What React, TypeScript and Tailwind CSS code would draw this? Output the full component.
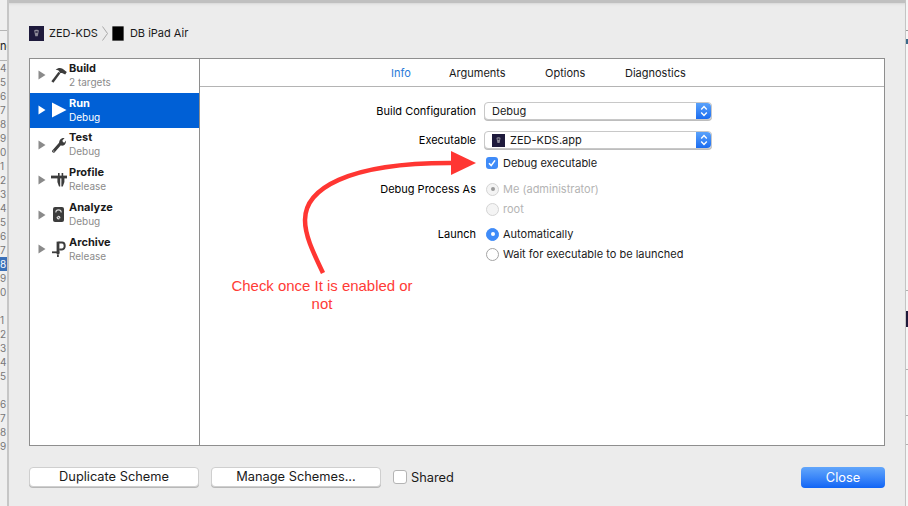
import React from 'react';

const lineNumbers = ['4', '5', '6', '7', '8', '9', '0', '1', '2', '3', '4', '5', '6', '7', '8', '9', '0', '', '1', '2', '3', '4', '5', '', '6', '7', '8', '9'];

const AppIcon = ({ size }: { size: number }) => (
  <svg width={size} height={size} viewBox="0 0 16 16" className="shrink-0">
    <rect width="16" height="16" fill="#1e1a3c" />
    <path d="M5.5 5 C6 3.5 10 3.5 10.5 5 L9.8 8.5 L9.3 11 H6.7 L6.2 8.5 Z" fill="#8d8b98" />
    <rect x="6.8" y="5.4" width="2.4" height="2" fill="#3a3650" />
  </svg>
);

const Hammer = () => (
  <svg width="16" height="16" viewBox="0 0 16 16">
    <path d="M0.4 14.2 L7.6 4.8 L9.4 6.2 L2.4 15.8 Z" fill="#3c3c3c" />
    <path d="M4.6 2.6 C7 0.6 9.6 0.4 11.6 1.8 L15.8 5 L14.2 7.6 L11 6 L9.2 6 L7.6 3.6 Z" fill="#3c3c3c" />
  </svg>
);

const RunTriangle = () => (
  <svg width="16" height="16" viewBox="0 0 16 16">
    <path d="M1 0.5 L15.5 8 L1 15.5 Z" fill="#ffffff" />
  </svg>
);

const Wrench = () => (
  <svg width="14" height="16" viewBox="0 0 14 16">
    <path d="M1.6 14.2 L8.4 6.6" stroke="#3c3c3c" strokeWidth="3" strokeLinecap="round" />
    <path d="M7.2 6.2 C6.8 3 9.4 0.6 12.6 1 L10.4 3.4 L11 5.2 L12.6 5.6 L14 3.6 C14.2 7 11.8 9 9.2 8.6 Z" fill="#3c3c3c" />
    <circle cx="1.8" cy="14" r="0.6" fill="#ffffff" />
  </svg>
);

const Caliper = () => (
  <svg width="16" height="14" viewBox="0 0 16 14">
    <rect x="0" y="2.6" width="16" height="2.8" fill="#3c3c3c" />
    <rect x="7" y="0" width="1.6" height="3" fill="#3c3c3c" />
    <rect x="10.6" y="0" width="1.6" height="3" fill="#3c3c3c" />
    <path d="M6.4 5 H9.2 V13.4 H8 L6.4 9 Z" fill="#3c3c3c" />
    <path d="M10.4 5 H13.4 V9 L11.8 13.4 H10.4 Z" fill="#3c3c3c" />
  </svg>
);

const AnalyzeIcon = () => (
  <svg width="11" height="15" viewBox="0 0 11 15">
    <rect width="11" height="15" rx="2" fill="#3c3c3c" />
    <path d="M2.8 5.6 A2.7 2.7 0 0 1 8.2 5.6" stroke="#d8d8d8" strokeWidth="1.1" fill="none" />
    <circle cx="5.5" cy="10.6" r="1.9" fill="#d8d8d8" />
    <path d="M4.4 9.6 L6.6 11.6" stroke="#3c3c3c" strokeWidth="0.8" />
  </svg>
);

const Clamp = () => (
  <svg width="14" height="16" viewBox="0 0 14 16">
    <path d="M6.5 1.6 H10 C13.6 1.6 13.6 8.4 10 8.4 H7.2" stroke="#3c3c3c" strokeWidth="2" fill="none" />
    <rect x="4.6" y="0.6" width="2.8" height="12.6" fill="#3c3c3c" />
    <rect x="0" y="10.4" width="7.4" height="1.8" fill="#3c3c3c" />
    <rect x="5" y="13.4" width="1.8" height="2.6" fill="#3c3c3c" />
  </svg>
);

const schemes = [
  { name: 'Build', sub: '2 targets', icon: <Hammer /> },
  { name: 'Run', sub: 'Debug', icon: <RunTriangle />, active: true },
  { name: 'Test', sub: 'Debug', icon: <Wrench /> },
  { name: 'Profile', sub: 'Release', icon: <Caliper /> },
  { name: 'Analyze', sub: 'Debug', icon: <AnalyzeIcon /> },
  { name: 'Archive', sub: 'Release', icon: <Clamp /> },
];

const SelectChevrons = () => (
  <span className="flex h-full w-[15px] items-center justify-center rounded-r-[4px] bg-gradient-to-b from-[#5aa2fb] to-[#1a6cf0]">
    <svg width="8" height="12" viewBox="0 0 8 12" fill="none" stroke="#ffffff" strokeWidth="1.4">
      <path d="M1.2 4.4 L4 1.6 L6.8 4.4" />
      <path d="M1.2 7.6 L4 10.4 L6.8 7.6" />
    </svg>
  </span>
);

const Radio = ({ on, disabled }: { on?: boolean; disabled?: boolean }) => (
  <span
    className={`flex h-[13px] w-[13px] shrink-0 items-center justify-center rounded-full border ${
      on && !disabled ? 'border-[#3f8bf8] bg-[#3f8bf8]' : disabled ? 'border-[#d4d4d4] bg-[#f4f4f4]' : 'border-[#a4a4a4] bg-white'
    }`}
  >
    {on && <span className={`h-[4px] w-[4px] rounded-full ${disabled ? 'bg-[#9a9a9a]' : 'bg-white'}`} />}
  </span>
);

const FormLabel = ({ children }: { children: React.ReactNode }) => (
  <div className="w-[279px] shrink-0 pr-[3px] text-right text-black">{children}</div>
);

export default function App() {
  return (
    <div className="relative flex h-[506px] w-[908px] overflow-hidden bg-[#ececec] font-['Inter',sans-serif] text-[11px] text-[#1a1a1a]">
      {/* editor peeking out behind the sheet */}
      <div className="flex w-[9px] shrink-0 flex-col overflow-hidden border-r-2 border-[#c6c6c6] bg-[#efefef]">
        <div className="h-[31px] shrink-0 border-b border-[#b4b4b4]" />
        <div className="h-[30px] shrink-0 whitespace-nowrap border-b border-[#b4b4b4] leading-[30px] text-[#222]">nd</div>
        <div className="flex flex-col pr-[3px] text-right text-[10px] leading-[14px] text-[#777]">
          {lineNumbers.map((n, i) => (
            <div key={i} className={`-mr-[3px] h-[14px] pr-[3px] ${i === 14 ? 'bg-[#3a70b8] text-white' : ''}`}>
              {n}
            </div>
          ))}
        </div>
      </div>

      <div className="flex min-w-0 flex-1 flex-col border-t-[3px] border-[#c0c0c0] bg-[#ececec] shadow-[inset_0_3px_3px_-2px_#d6d6d6]">
        {/* scheme path */}
        <div className="flex h-[55px] shrink-0 items-center gap-[4px] pl-[20px] pt-[6px] text-[11px]">
          <AppIcon size={15} />
          <span className="ml-[1px]">ZED-KDS</span>
          <svg width="6" height="15" viewBox="0 0 6 15" fill="none" stroke="#a8a8a8">
            <path d="M0.5 0.5 L5.5 7.5 L0.5 14.5" />
          </svg>
          <span className="h-[15px] w-[12px] rounded-[1px] border border-[#555] bg-black" />
          <span className="ml-[2px]">DB iPad Air</span>
        </div>

        {/* main panel */}
        <div className="ml-[20px] mr-[20px] flex h-[388px] shrink-0 border border-[#8e8e8e] bg-white">
          <div className="w-[170px] shrink-0 overflow-hidden border-r border-[#8e8e8e]">
            <div className="-mt-[1px]">
              {schemes.map(s => (
                <div key={s.name} className={`flex h-[34.8px] items-center ${s.active ? 'bg-[#0060d6] text-white' : ''}`}>
                  <svg width="8" height="10" viewBox="0 0 8 10" className="ml-[8px] shrink-0">
                    <path d="M0.5 0.5 L7.5 5 L0.5 9.5 Z" fill={s.active ? '#ffffff' : '#8a8a8a'} />
                  </svg>
                  <div className="ml-[2px] flex w-[20px] shrink-0 items-center justify-center pl-[1px]">{s.icon}</div>
                  <div className="ml-[1px] flex flex-col pb-[1px]">
                    <span className="text-[11px] font-bold leading-[14px]">{s.name}</span>
                    <span className={`text-[10px] leading-[14px] ${s.active ? 'text-white' : 'text-[#8b8b8b]'}`}>{s.sub}</span>
                  </div>
                </div>
              ))}
            </div>
          </div>

          <div className="min-w-0 flex-1">
            <div className="flex h-[28px] items-center border-b border-[#b4b4b4] pl-[191px] pt-[1px] text-[11px]">
              <span className="w-[58px] text-[#2a7ad8]">Info</span>
              <span className="w-[96px]">Arguments</span>
              <span className="w-[80px]">Options</span>
              <span>Diagnostics</span>
            </div>

            <div className="flex flex-col pt-[15px]">
              <div className="flex h-[18px] items-center">
                <FormLabel>Build Configuration</FormLabel>
                <div className="ml-[5px] flex h-[18px] w-[228px] items-center justify-between rounded-[4px] border border-[#c8c8c8] bg-white pl-[7px] shadow-[0_1px_0_#bdbdbd]">
                  <span>Debug</span>
                  <SelectChevrons />
                </div>
              </div>
              <div className="mt-[11px] flex h-[18px] items-center">
                <FormLabel>Executable</FormLabel>
                <div className="ml-[5px] flex h-[18px] w-[228px] items-center justify-between rounded-[4px] border border-[#c8c8c8] bg-white pl-[7px] shadow-[0_1px_0_#bdbdbd]">
                  <span className="flex items-center gap-[5px]">
                    <AppIcon size={13} />
                    ZED-KDS.app
                  </span>
                  <SelectChevrons />
                </div>
              </div>
              <div className="mt-[7px] flex h-[14px] items-center pl-[286px]">
                <span className="flex h-[12px] w-[12px] shrink-0 items-center justify-center rounded-[3px] bg-[#3f8bf8]">
                  <svg width="10" height="10" viewBox="0 0 10 10" fill="none" stroke="#ffffff" strokeWidth="1.6">
                    <path d="M2 5.2 L4.2 7.6 L8 2.4" />
                  </svg>
                </span>
                <span className="ml-[5px]">Debug executable</span>
              </div>

              <div className="mt-[12px] flex h-[14px] items-center">
                <FormLabel>Debug Process As</FormLabel>
                <div className="ml-[7px] flex items-center gap-[4px] text-[#b4b4b4]">
                  <Radio on disabled />
                  Me (administrator)
                </div>
              </div>
              <div className="mt-[6px] flex h-[14px] items-center pl-[286px] text-[#b4b4b4]">
                <Radio disabled />
                <span className="ml-[4px]">root</span>
              </div>

              <div className="mt-[11px] flex h-[14px] items-center">
                <FormLabel>Launch</FormLabel>
                <div className="ml-[7px] flex items-center gap-[4px]">
                  <Radio on />
                  Automatically
                </div>
              </div>
              <div className="mt-[6px] flex h-[14px] items-center pl-[286px]">
                <Radio />
                <span className="ml-[4px]">Wait for executable to be launched</span>
              </div>
            </div>
          </div>
        </div>

        {/* footer */}
        <div className="flex flex-1 items-start px-[20px] pt-[21px] text-[12.8px]">
          <button className="h-[20px] w-[170px] rounded-[4px] border border-[#cfcfcf] bg-white leading-[18px] shadow-[0_1px_0_#b8b8b8]">
            Duplicate Scheme
          </button>
          <button className="ml-[12px] h-[20px] w-[170px] rounded-[4px] border border-[#cfcfcf] bg-white leading-[18px] shadow-[0_1px_0_#b8b8b8]">
            Manage Schemes...
          </button>
          <span className="ml-[12px] mt-[3px] h-[14px] w-[14px] shrink-0 rounded-[3px] border border-[#b4b4b4] bg-white" />
          <span className="ml-[4px] leading-[21px]">Shared</span>
          <button className="ml-auto h-[21px] w-[84px] rounded-[4px] bg-gradient-to-b from-[#62a6fb] to-[#0f64f5] leading-[20px] text-white">
            Close
          </button>
        </div>
      </div>

      {/* editor strip on the right */}
      <div className="flex w-[3px] shrink-0 flex-col border-l border-[#c4c4c4] bg-[#f6f6f6]">
        <div className="h-[31px] border-b border-[#9a9a9a]" />
        <div className="mt-[8px] h-[5px] bg-[#3a6a8a]" />
        <div className="mt-[246px] h-px bg-[#b0b0b0]" />
        <div className="mt-[20px] h-[16px] bg-[#1e1a3c]" />
        <div className="mt-[42px] h-px bg-[#b0b0b0]" />
        <div className="mt-[45px] h-px bg-[#b0b0b0]" />
        <div className="mt-[28px] h-px bg-[#b0b0b0]" />
      </div>

      {/* red annotation on top of the window */}
      <svg className="pointer-events-none absolute left-0 top-0" width="908" height="506" viewBox="0 0 908 506" fill="none">
        <path d="M323 273 C312 250 305 235 305 220 C305 190 345 162 455 163" stroke="#ff3632" strokeWidth="4.5" />
        <path d="M451 151 L476 163 L451 175 Z" fill="#ff3632" />
      </svg>
      <div className="absolute left-[222px] top-[277px] w-[200px] text-center font-['Liberation_Sans',sans-serif] text-[14.95px] leading-[18px] text-[#ff3b36]">
        Check once It is enabled or not
      </div>
    </div>
  );
}
